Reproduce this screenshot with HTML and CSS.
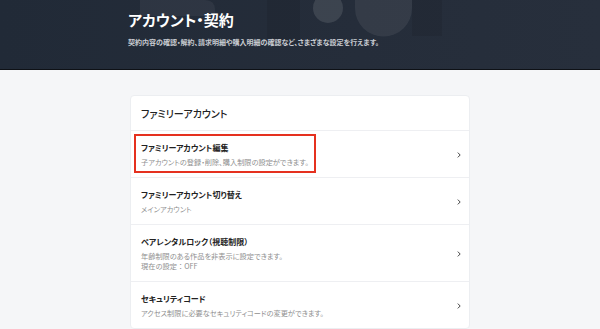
FILE: index.html
```html
<!DOCTYPE html>
<html lang="ja">
<head>
    <meta charset="UTF-8">
    <meta name="viewport" content="width=device-width, initial-scale=1.0">
    <title>アカウント・契約</title>
    <link rel="stylesheet" href="styles.css">
</head>
<body>
    <header class="hero">
        <svg class="hero-deco" width="600" height="69" viewBox="0 0 600 69">
            <path d="M140 0 H205 Q215 0 215 10 V16 H140 Z" fill="#ffffff" opacity="0.05"/>
            <rect x="267" y="0" width="33" height="40" fill="#000000" opacity="0.08"/>
            <circle cx="328" cy="8" r="15" fill="#ffffff" opacity="0.11"/>
            <path d="M355 0 H412 V8 A28.5 28.5 0 0 1 355 8 Z" fill="#ffffff" opacity="0.07"/>
            <rect x="412" y="0" width="30" height="36" fill="#000000" opacity="0.07"/>
        </svg>
        <div class="hero-inner">
            <h1>アカウント・契約</h1>
            <p>契約内容の確認・解約、請求明細や購入明細の確認など、さまざまな設定を行えます。</p>
        </div>
    </header>

    <main class="wrap">
        <section class="card">
            <h2 class="card-title">ファミリーアカウント</h2>
            <a class="row">
                <div class="row-text">
                    <div class="row-name">ファミリーアカウント編集</div>
                    <div class="row-sub">子アカウントの登録・削除、購入制限の設定ができます。</div>
                </div>
                <svg class="chev" width="4" height="6" viewBox="0 0 4 6"><path d="M0.8 0.6 L3.2 3 L0.8 5.4" fill="none" stroke="#444" stroke-width="1"/></svg>
                <span class="mark"></span>
            </a>
            <a class="row">
                <div class="row-text">
                    <div class="row-name">ファミリーアカウント切り替え</div>
                    <div class="row-sub">メインアカウント</div>
                </div>
                <svg class="chev" width="4" height="6" viewBox="0 0 4 6"><path d="M0.8 0.6 L3.2 3 L0.8 5.4" fill="none" stroke="#444" stroke-width="1"/></svg>
            </a>
            <a class="row">
                <div class="row-text">
                    <div class="row-name">ペアレンタルロック（視聴制限）</div>
                    <div class="row-sub">年齢制限のある作品を非表示に設定できます。<br><span class="wide">現在の設定：OFF</span></div>
                </div>
                <svg class="chev" width="4" height="6" viewBox="0 0 4 6"><path d="M0.8 0.6 L3.2 3 L0.8 5.4" fill="none" stroke="#444" stroke-width="1"/></svg>
            </a>
            <a class="row">
                <div class="row-text">
                    <div class="row-name">セキュリティコード</div>
                    <div class="row-sub">アクセス制限に必要なセキュリティコードの変更ができます。</div>
                </div>
                <svg class="chev" width="4" height="6" viewBox="0 0 4 6"><path d="M0.8 0.6 L3.2 3 L0.8 5.4" fill="none" stroke="#444" stroke-width="1"/></svg>
            </a>
        </section>
    </main>
</body>
</html>
```

FILE: styles.css
```css
*{
    margin: 0;padding: 0;box-sizing: border-box;
}
body{
    background-color: #f5f6f8;
    font-family: "Noto Sans CJK JP", "Noto Sans", sans-serif;
    font-feature-settings: "palt";
    color: #222;
}
.hero{
    height: 70px;
    background: linear-gradient(90deg, #212a37 0%, #252d3a 60%, #272f3c 100%);
    border-bottom: 1px solid #0e1116;
    position: relative;
    overflow: hidden;
}
.hero-deco{
    position: absolute;
    top: 0;
    left: 0;
}
.hero-inner{
    position: relative;
    width: 344px;
    margin: 0 auto;
    padding-top: 10px;
}
.hero-inner>h1{
    font-size: 15px;
    line-height: 20px;
    font-weight: 700;
    color: #fff;
}
.hero-inner>p{
    margin-top: 7px;
    font-size: 7px;
    line-height: 10px;
    font-weight: 700;
    color: #c9ccd2;
}

.wrap{
    width: 340px;
    margin: 25px auto 0;
}
.card{
    background-color: #fff;
    border-radius: 4px;
    border: 1px solid #eceef1;
    overflow: hidden;
}
.card-title{
    height: 35px;
    padding-left: 10px;
    font-size: 10px;
    line-height: 35px;
    font-weight: 500;
    border-bottom: 1px solid #eeeff2;
}
.row{
    display: flex;
    align-items: center;
    padding: 11px 8px 10px 10px;
    border-bottom: 1px solid #eeeff2;
    position: relative;
}
.row:last-child{
    border-bottom: none;
}
.row-text{
    flex: 1;
}
.row-name{
    font-size: 8px;
    line-height: 11px;
    font-weight: 700;
    color: #222;
}
.row-sub{
    margin-top: 4px;
    font-size: 7.2px;
    line-height: 10px;
    color: #8f8f8f;
}
.row-sub .wide{
    font-feature-settings: normal;
}
.chev{
    display: block;
}
.mark{
    position: absolute;
    left: 3px;
    top: 3px;
    width: 182px;
    height: 39px;
    border: 2px solid #e5311f;
}
```
